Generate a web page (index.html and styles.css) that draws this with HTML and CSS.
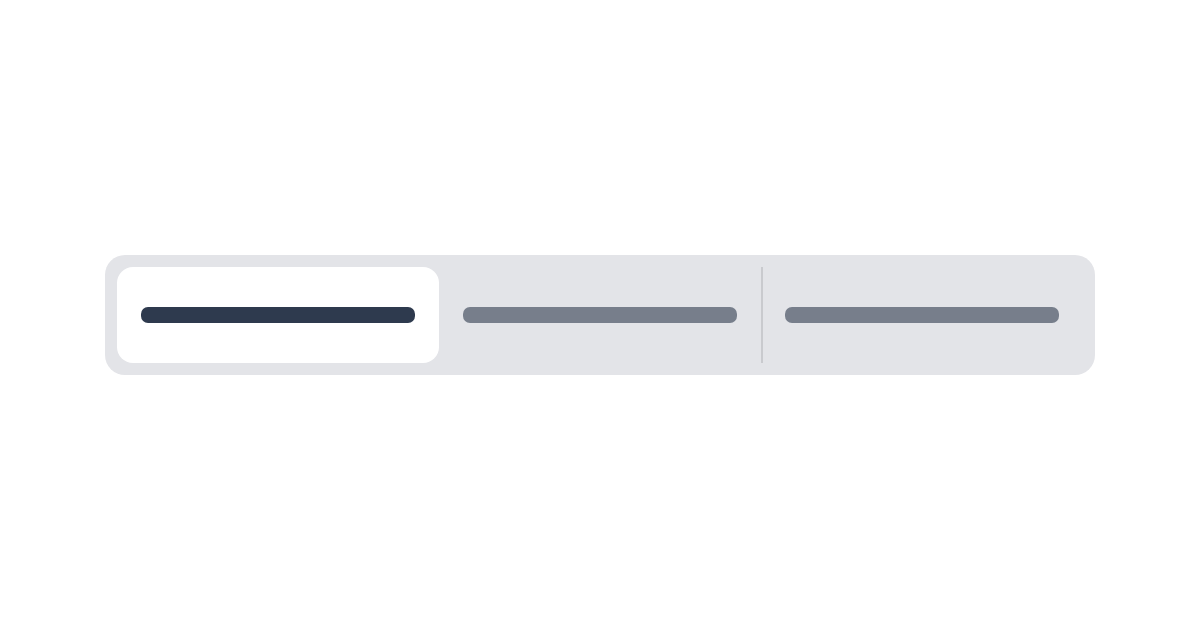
FILE: index.html
```html
<!DOCTYPE html>
<html>
<head>
<meta charset="utf-8">
<link rel="stylesheet" href="styles.css">
</head>
<body>
<div class="page">
  <div class="segmented">
    <div class="segment active"><span class="bar"></span></div>
    <div class="segment"><span class="bar"></span></div>
    <div class="segment divided"><span class="bar"></span></div>
  </div>
</div>
</body>
</html>
```
FILE: styles.css
```css
html, body {
  margin: 0;
  padding: 0;
  background: #ffffff;
  font-family: "Liberation Sans", Arial, sans-serif;
}
.page {
  width: 1200px;
  height: 630px;
  display: flex;
  align-items: center;
  justify-content: center;
}
.segmented {
  width: 990px;
  height: 120px;
  box-sizing: border-box;
  padding: 12px;
  background: #e3e4e8;
  border-radius: 20px;
  display: flex;
  margin-top: 0;
}
.segment {
  position: relative;
  flex: 1 1 0;
  height: 96px;
  box-sizing: border-box;
  padding: 0 24px;
  display: flex;
  align-items: center;
  border-radius: 16px;
}
.segment.active {
  background: #ffffff;
}
.segment.divided::before {
  content: "";
  position: absolute;
  left: 0;
  top: 0;
  width: 2px;
  height: 96px;
  background: #c9cace;
}
.bar {
  display: block;
  width: 100%;
  height: 16px;
  border-radius: 7px;
  background: #777e8b;
}
.segment.active .bar {
  background: #2e3a4e;
}
```
